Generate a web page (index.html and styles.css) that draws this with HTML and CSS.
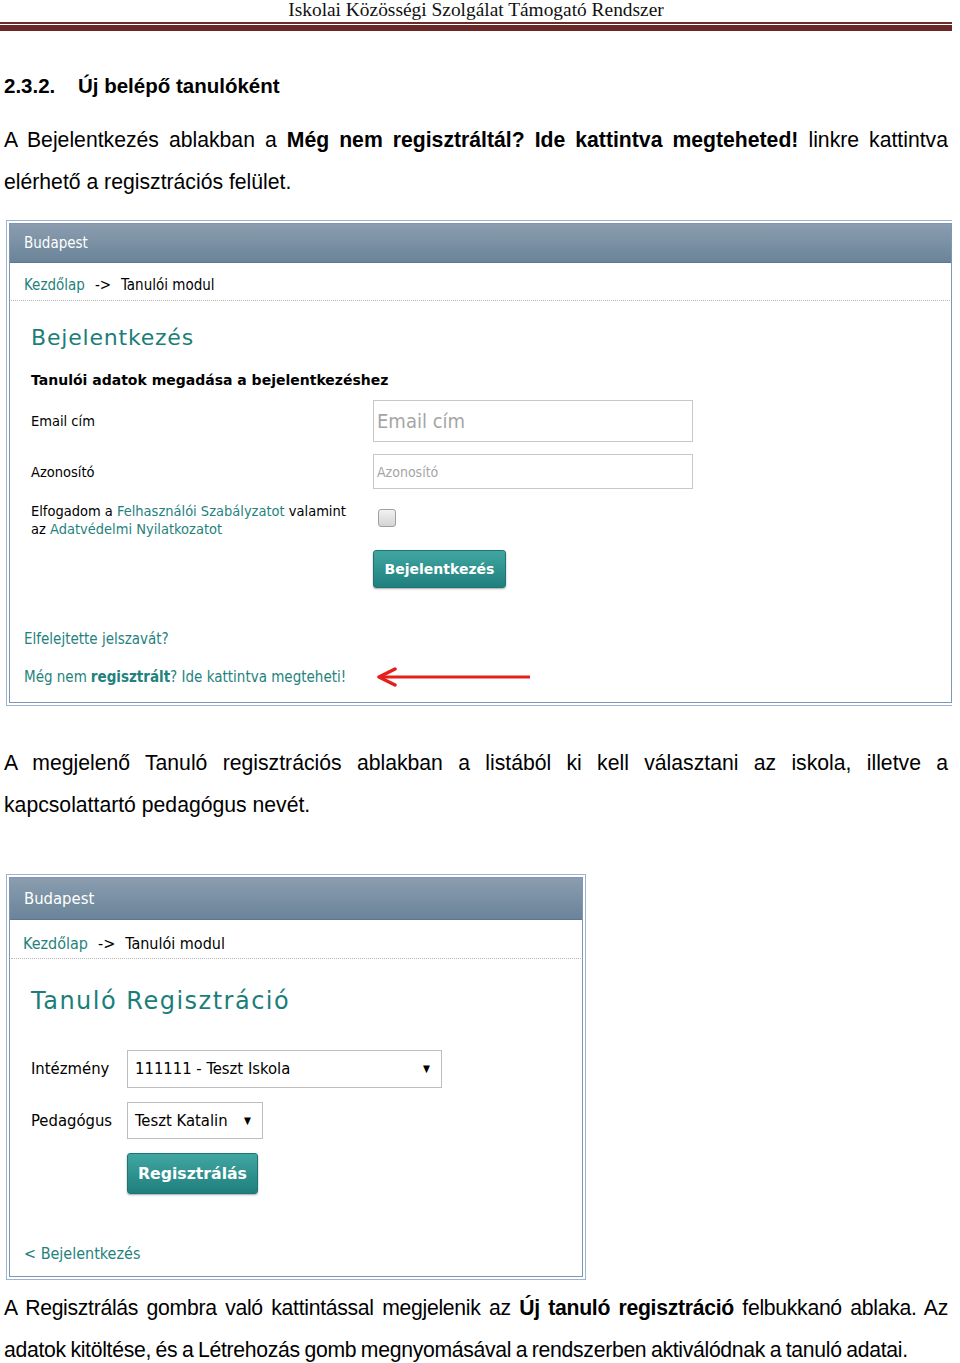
FILE: index.html
```html
<!DOCTYPE html>
<html lang="hu">
<head>
  <meta charset="UTF-8" />
  <title>Iskolai Közösségi Szolgálat Támogató Rendszer</title>
  <link rel="stylesheet" href="styles.css">
</head>
<body>

<header class="doc-head">
  <div class="doc-title">Iskolai Közösségi Szolgálat Támogató Rendszer</div>
  <div class="rule-thin"></div>
  <div class="rule-thick"></div>
</header>

<h2 class="section"><span class="num">2.3.2.</span>Új belépő tanulóként</h2>

<p class="text first">A Bejelentkezés ablakban a <b>Még nem regisztráltál? Ide kattintva megteheted!</b> linkre kattintva elérhető a regisztrációs felület.</p>

<!-- 1. kép: bejelentkezés -->
<div class="shot shot-login">
  <div class="win">
    <div class="win-bar">Budapest</div>
    <div class="crumbs"><span class="link">Kezdőlap</span><span class="arrow">-&gt;</span>Tanulói modul</div>

    <div class="login">
      <div class="login-title">Bejelentkezés</div>
      <div class="login-sub">Tanulói adatok megadása a bejelentkezéshez</div>

      <div class="form">
        <div class="label">Email cím</div>
        <input class="input input-big" type="text" placeholder="Email cím">

        <div class="label">Azonosító</div>
        <input class="input input-small" type="text" placeholder="Azonosító">

        <div class="label label-top">Elfogadom a <span class="link">Felhasználói Szabályzatot</span> valamint<br>az <span class="link">Adatvédelmi Nyilatkozatot</span></div>
        <div class="check-cell"><span class="checkbox"></span></div>

        <div></div>
        <div><button class="btn btn-login">Bejelentkezés</button></div>
      </div>
    </div>

    <div class="login-links">
      <div class="link">Elfelejtette jelszavát?</div>
      <div class="link reg-line">Még nem <b>regisztrált</b>? Ide kattintva megteheti!
        <svg class="red-arrow" width="156" height="20" viewBox="0 0 156 20">
          <path d="M3 10 H154" stroke="#e3201b" stroke-width="3" fill="none"/>
          <path d="M19 2 L3 10 L19 18" stroke="#e3201b" stroke-width="3.5" fill="none" stroke-linecap="round" stroke-linejoin="round"/>
        </svg>
      </div>
    </div>
  </div>
</div>

<p class="text second">A megjelenő Tanuló regisztrációs ablakban a listából ki kell választani az iskola, illetve a kapcsolattartó pedagógus nevét.</p>

<!-- 2. kép: regisztráció -->
<div class="shot shot-reg">
  <div class="win">
    <div class="win-bar">Budapest</div>
    <div class="crumbs"><span class="link">Kezdőlap</span><span class="arrow">-&gt;</span>Tanulói modul</div>

    <div class="reg">
      <div class="reg-title">Tanuló Regisztráció</div>

      <div class="reg-form">
        <div class="label">Intézmény</div>
        <div class="select select-wide">111111 - Teszt Iskola<span class="caret">▼</span></div>

        <div class="label">Pedagógus</div>
        <div class="select select-narrow">Teszt Katalin<span class="caret">▼</span></div>

        <div></div>
        <div><button class="btn btn-reg">Regisztrálás</button></div>
      </div>
    </div>

    <div class="back link">&lt; Bejelentkezés</div>
  </div>
</div>

<p class="text third">A Regisztrálás gombra való kattintással megjelenik az <b>Új tanuló regisztráció</b> felbukkanó ablaka. Az adatok kitöltése, és a Létrehozás gomb megnyomásával a rendszerben aktiválódnak a tanuló adatai.</p>

</body>
</html>
```

FILE: styles.css
```css
body {
  margin: 0;
  width: 944px;
  padding: 0 4px;
  font-family: 'Liberation Sans', Arial, sans-serif;
  font-size: 21.2px;
  color: #000;
  background: #fff;
}

/* dokumentum fejléc */
.doc-head {
  width: 952px;
  margin-left: -4px;
}

.doc-title {
  font-family: 'Liberation Serif', serif;
  font-size: 19.4px;
  line-height: 20px;
  text-align: center;
  color: #111;
}

.rule-thin {
  height: 2px;
  margin-top: 2px;
  background: #6d2b29;
}

.rule-thick {
  height: 6px;
  margin-top: 1px;
  background: #6a2826;
}

.section {
  margin: 40px 0 0;
  font-size: 20.5px;
  line-height: 30px;
}

.section .num {
  display: inline-block;
  width: 74px;
}

.text {
  margin: 0;
  line-height: 42px;
  text-align: justify;
}

.text.first { margin-top: 18px; }
.text.second { margin-top: 36px; }

.text.third {
  margin-top: 7px;
  letter-spacing: -0.3px;
  word-spacing: -1px;
}

/* képernyőképek */
.shot {
  margin-left: 2px;
  border: 1px solid #9fb4cf;
  padding: 2px;
  font-family: 'DejaVu Sans Condensed', 'DejaVu Sans', sans-serif;
  font-stretch: semi-condensed;
  background: #fff;
}

.shot-login {
  width: 943px;
  margin-top: 17px;
}

.shot-reg {
  width: 574px;
  margin-top: 48px;
}

.win {
  border: 1px solid #8097b1;
}

.win-bar {
  height: 38px;
  line-height: 38px;
  padding-left: 14px;
  color: #fff;
  font-size: 15px;
  background: linear-gradient(#8b9daf, #6a8499);
  border-bottom: 1px solid #5f768c;
}

.shot-reg .win-bar {
  height: 41px;
  line-height: 41px;
  font-size: 16.5px;
}

.crumbs {
  margin: 0 1px;
  padding: 13px 13px 6px;
  line-height: 18px;
  font-size: 15px;
  border-bottom: 1px dotted #b8b8b8;
}

.shot-reg .crumbs {
  padding: 15px 12px 5px;
  font-size: 16px;
}

.crumbs .arrow {
  margin: 0 10px;
}

.link {
  color: #1f827d;
}

/* bejelentkezés */
.login {
  padding: 22px 0 0 21px;
}

.login-title {
  font-family: 'DejaVu Sans', sans-serif;
  font-stretch: normal;
  font-size: 22px;
  letter-spacing: 0.8px;
  line-height: 30px;
  color: #1b7e7a;
}

.login-sub {
  margin-top: 17px;
  font-family: 'DejaVu Sans', sans-serif;
  font-stretch: normal;
  font-weight: bold;
  font-size: 14px;
  line-height: 20px;
}

.form {
  display: grid;
  grid-template-columns: 342px 320px;
  align-items: center;
  row-gap: 12px;
  margin-top: 10px;
}

.label {
  font-size: 14.5px;
  line-height: 18px;
}

.label-top {
  align-self: start;
  margin-top: 1px;
}

.input {
  box-sizing: border-box;
  width: 320px;
  border: 1px solid #c8c8c8;
  padding: 0 3px;
  font-family: 'DejaVu Sans Condensed', 'DejaVu Sans', sans-serif;
  font-stretch: semi-condensed;
  outline: none;
}

.input::placeholder {
  color: #a5a5a5;
}

.input-big {
  height: 42px;
  font-size: 20px;
}

.input-small {
  height: 35px;
  font-size: 14px;
}

.check-cell {
  align-self: start;
}

.checkbox {
  display: block;
  width: 16px;
  height: 16px;
  margin: 8px 0 0 5px;
  border: 1px solid #a0a0a0;
  border-radius: 3px;
  background: linear-gradient(#f2f2f2, #d4d4d4);
}

.btn {
  box-sizing: border-box;
  border: 1px solid #1c7572;
  border-radius: 3px;
  color: #fff;
  font-family: 'DejaVu Sans', sans-serif;
  font-weight: bold;
  background: linear-gradient(#41a6a2, #1f7f7c);
  box-shadow: 0 1px 2px rgba(0, 0, 0, 0.35);
  cursor: pointer;
}

.btn-login {
  width: 133px;
  height: 38px;
  font-size: 14px;
}

.btn-reg {
  width: 131px;
  height: 41px;
  font-size: 15.7px;
}

.login-links {
  padding: 42px 0 15px 14px;
  font-size: 15px;
  line-height: 18px;
}

.reg-line {
  margin-top: 19px;
  display: flex;
  align-items: center;
}

.reg-line b {
  margin: 0 0 0 4px;
}

.red-arrow {
  margin-left: 30px;
}

/* regisztráció */
.reg {
  padding: 26px 0 0 21px;
}

.reg-title {
  font-family: 'DejaVu Sans', sans-serif;
  font-stretch: normal;
  font-size: 24px;
  letter-spacing: 1.5px;
  line-height: 32px;
  color: #1b7e7a;
}

.reg-form {
  display: grid;
  grid-template-columns: 96px auto;
  justify-items: start;
  align-items: center;
  row-gap: 14px;
  margin-top: 33px;
}

.reg-form .label {
  font-size: 16.5px;
}

.select {
  box-sizing: border-box;
  position: relative;
  border: 1px solid #bdbdbd;
  padding-left: 7px;
  font-size: 16.5px;
  background: #fff;
}

.select-wide {
  width: 315px;
  height: 38px;
  line-height: 36px;
}

.select-narrow {
  width: 136px;
  height: 37px;
  line-height: 35px;
}

.caret {
  position: absolute;
  right: 11px;
  top: 0;
  font-size: 10px;
}

.back {
  padding: 50px 0 12px 14px;
  font-size: 16px;
  line-height: 20px;
}
```
